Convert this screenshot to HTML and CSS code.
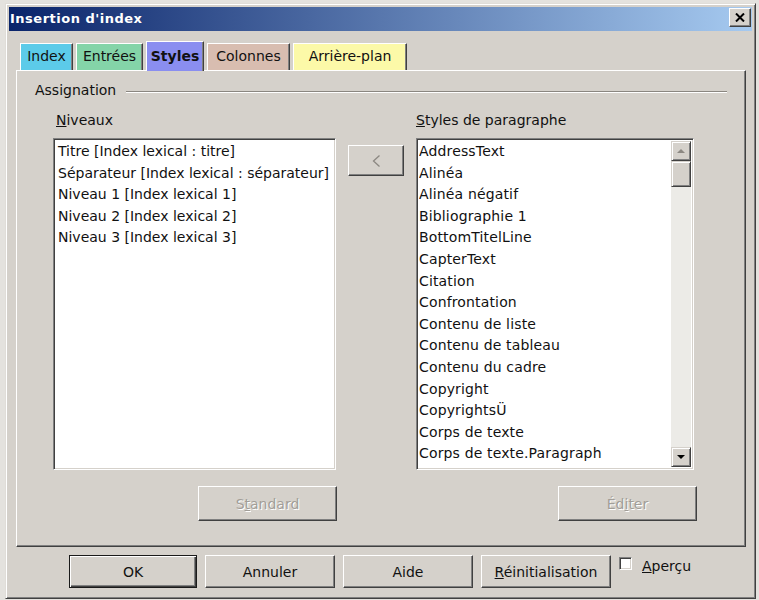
FILE: index.html
```html
<!DOCTYPE html>
<html lang="fr">
<head>
    <meta charset="UTF-8">
    <title>Insertion d'index</title>
    <link rel="stylesheet" href="styles.css">
</head>
<body>
    <div class="window">
        <div class="titlebar">
            <span class="title">Insertion d'index</span>
            <button class="close-btn" title="Fermer">
                <svg width="10" height="9" viewBox="0 0 10 9">
                    <path d="M1 0.5 L9 8.5 M9 0.5 L1 8.5" stroke="#000" stroke-width="2" fill="none"/>
                </svg>
            </button>
        </div>
        <div class="content">
            <div class="tabs">
                <div class="tab tab-index">Index</div>
                <div class="tab tab-entries">Entrées</div>
                <div class="tab tab-styles active">Styles</div>
                <div class="tab tab-columns">Colonnes</div>
                <div class="tab tab-background">Arrière-plan</div>
            </div>
            <div class="tab-panel">
                <div class="fixed-line">
                    <span>Assignation</span>
                    <span class="rule"></span>
                </div>
                <div class="columns">
                    <div class="col col-levels">
                        <div class="field-label field-label-levels"><u>N</u>iveaux</div>
                        <div class="listbox listbox-levels">
                            <div class="list-items">
                                <div class="item">Titre [Index lexical : titre]</div>
                                <div class="item">Séparateur [Index lexical : séparateur]</div>
                                <div class="item">Niveau 1 [Index lexical 1]</div>
                                <div class="item">Niveau 2 [Index lexical 2]</div>
                                <div class="item">Niveau 3 [Index lexical 3]</div>
                            </div>
                        </div>
                        <div class="col-actions">
                            <button class="btn btn-wide" disabled>S<u>t</u>andard</button>
                        </div>
                    </div>
                    <div class="col-mid">
                        <button class="btn btn-assign" disabled>
                            <svg width="9" height="12" viewBox="0 0 9 12">
                                <path d="M7.5 0.5 L1.5 6 L7.5 11.5" stroke="#8c8882" stroke-width="1.3" fill="none"/>
                            </svg>
                        </button>
                    </div>
                    <div class="col col-styles">
                        <div class="field-label"><u>S</u>tyles de paragraphe</div>
                        <div class="listbox listbox-styles">
                            <div class="list-items">
                                <div class="item">AddressText</div>
                                <div class="item">Alinéa</div>
                                <div class="item">Alinéa négatif</div>
                                <div class="item">Bibliographie 1</div>
                                <div class="item">BottomTitelLine</div>
                                <div class="item">CapterText</div>
                                <div class="item">Citation</div>
                                <div class="item">Confrontation</div>
                                <div class="item">Contenu de liste</div>
                                <div class="item">Contenu de tableau</div>
                                <div class="item">Contenu du cadre</div>
                                <div class="item">Copyright</div>
                                <div class="item">CopyrightsÜ</div>
                                <div class="item">Corps de texte</div>
                                <div class="item">Corps de texte.Paragraph</div>
                            </div>
                            <div class="scrollbar">
                                <div class="sb-btn"><span class="arrow-up"></span></div>
                                <div class="sb-track"><div class="sb-thumb"></div></div>
                                <div class="sb-btn"><span class="arrow-down"></span></div>
                            </div>
                        </div>
                        <div class="col-actions">
                            <button class="btn btn-wide" disabled>Éd<u>i</u>ter</button>
                        </div>
                    </div>
                </div>
            </div>
            <div class="footer">
                <button class="btn btn-footer btn-default">OK</button>
                <button class="btn btn-footer">Annuler</button>
                <button class="btn btn-footer">Aide</button>
                <button class="btn btn-footer"><u>R</u>éinitialisation</button>
                <label class="check-label">
                    <span class="check"></span>
                    <span class="check-text"><u>A</u>perçu</span>
                </label>
            </div>
        </div>
    </div>
</body>
</html>
```

FILE: styles.css
```css
html, body {
    margin: 0;
    height: 100%;
    background: #e4e2de;
    font-family: "DejaVu Sans", Verdana, sans-serif;
    font-size: 14px;
    color: #111;
}
.window {
    box-sizing: border-box;
    width: 751px;
    height: 596px;
    margin: 3px 0 0 5px;
    padding: 3px;
    background: #d5d1cb;
    border: 1px solid;
    border-color: #e0ddd8 #404040 #404040 #e0ddd8;
    box-shadow: inset 1px 1px #fff, inset -1px -1px #808080;
}
.titlebar {
    display: flex;
    align-items: flex-start;
    justify-content: space-between;
    height: 24px;
    padding-left: 1px;
    background: linear-gradient(to right, #0a246a, #a6caf0);
}
.title {
    color: #fff;
    font-weight: bold;
    font-size: 13px;
    letter-spacing: 0.5px;
    line-height: 24px;
}
.close-btn {
    box-sizing: border-box;
    width: 22px;
    height: 19px;
    margin: 1px 1px 0 0;
    padding: 0;
    display: flex;
    justify-content: center;
    align-items: center;
    background: #d5d1cb;
    border: 1px solid;
    border-color: #fff #404040 #404040 #fff;
    box-shadow: inset -1px -1px #808080;
}
.content {
    padding: 10px 6px 0 7px;
}
.tabs {
    display: flex;
    align-items: flex-end;
    height: 29px;
    padding-left: 4px;
}
.tab {
    position: relative;
    box-sizing: border-box;
    height: 27px;
    margin-right: 3px;
    border: 1px solid;
    border-bottom: none;
    border-color: #fff #404040 transparent #fff;
    box-shadow: inset -1px 0 #808080;
    text-align: center;
    line-height: 25px;
    white-space: nowrap;
}
.tab.active {
    height: 30px;
    margin-bottom: -1px;
    font-weight: bold;
    line-height: 28px;
}
.tab-index { width: 53px; background: #5ccbe9; }
.tab-entries { width: 67px; background: #84d4a8; }
.tab-styles { width: 58px; background: #8a8ef0; }
.tab-columns { width: 83px; background: #d8bdb0; }
.tab-background { width: 114px; background: #fcf9a8; }
.tab-panel {
    box-sizing: border-box;
    height: 477px;
    padding: 11px 18px 0 18px;
    border: 1px solid;
    border-color: #fff #404040 #404040 #fff;
    box-shadow: inset -1px -1px #808080;
}
.fixed-line {
    display: flex;
    align-items: center;
    line-height: 17px;
}
.rule {
    flex: 1;
    height: 0;
    margin: 2px 0 0 10px;
    border-top: 1px solid #8a8680;
    border-bottom: 1px solid #fff;
}
.columns {
    display: flex;
    margin: 13px 0 0 18px;
}
.col-levels { width: 284px; }
.col-styles { width: 281px; }
.field-label {
    line-height: 17px;
    margin-bottom: 9px;
}
.field-label-levels {
    padding-left: 3px;
}
.listbox {
    box-sizing: border-box;
    height: 332px;
    padding: 2px;
    background: #fff;
    border: 1px solid;
    border-color: #808080 #fff #fff #808080;
    box-shadow: inset 1px 1px #404040, inset -1px -1px #d5d1cb;
}
.listbox-levels { width: 283px; }
.listbox-styles {
    width: 278px;
    display: flex;
}
.list-items {
    flex: 1;
    overflow: hidden;
    white-space: nowrap;
    line-height: 21.6px;
}
.listbox-levels .list-items {
    padding-left: 2px;
}
.listbox-styles .list-items {
    letter-spacing: 0.15px;
}
.scrollbar {
    display: flex;
    flex-direction: column;
    width: 20px;
}
.sb-btn, .sb-thumb {
    box-sizing: border-box;
    height: 20px;
    background: #d5d1cb;
    border: 1px solid;
    border-color: #d5d1cb #404040 #404040 #d5d1cb;
    box-shadow: inset 1px 1px #fff, inset -1px -1px #808080;
    display: flex;
    justify-content: center;
    align-items: center;
}
.sb-track {
    flex: 1;
    background: #ecebe7;
}
.sb-thumb {
    height: 26px;
}
.arrow-up {
    border-left: 4px solid transparent;
    border-right: 4px solid transparent;
    border-bottom: 4px solid #8c8882;
}
.arrow-down {
    border-left: 4px solid transparent;
    border-right: 4px solid transparent;
    border-top: 4px solid #000;
}
.col-mid {
    width: 56px;
    margin: 0 12px 0 11px;
    padding-top: 33px;
}
.col-actions {
    display: flex;
    justify-content: flex-end;
    margin-top: 16px;
}
.btn {
    box-sizing: border-box;
    padding: 0;
    font: inherit;
    color: #111;
    background: #d5d1cb;
    border: 1px solid;
    border-color: #fff #404040 #404040 #fff;
    box-shadow: inset -1px -1px #808080;
}
.btn:disabled {
    color: #a29e98;
    text-shadow: 1px 1px #fff;
}
.btn-wide {
    width: 139px;
    height: 35px;
}
.btn-assign {
    width: 56px;
    height: 31px;
    display: flex;
    justify-content: center;
    align-items: center;
}
.footer {
    display: flex;
    align-items: flex-start;
    gap: 8px;
    margin-top: 8px;
    padding-left: 53px;
}
.btn-footer {
    width: 130px;
    height: 33px;
}
.btn-default {
    width: 128px;
    border: 1px solid #1a1a1a;
    box-shadow: inset 1px 1px #fff, inset -1px -1px #404040, inset -2px -2px #808080;
}
.check-label {
    display: flex;
    align-items: flex-start;
}
.check {
    box-sizing: border-box;
    width: 13px;
    height: 13px;
    margin-top: 2px;
    background: #fff;
    border: 1px solid;
    border-color: #808080 #fff #fff #808080;
    box-shadow: inset 1px 1px #404040, inset -1px -1px #d5d1cb;
}
.check-text {
    margin: 3px 0 0 10px;
    line-height: 17px;
}
```
